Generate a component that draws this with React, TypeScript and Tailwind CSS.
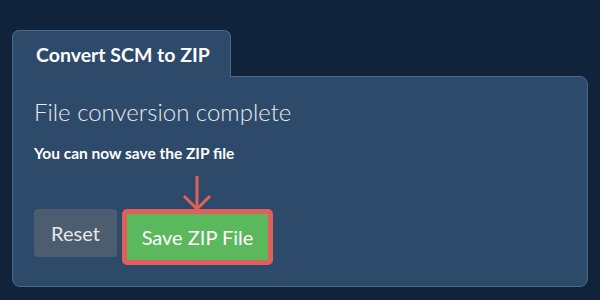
export default function App() {
  return (
    <div className="h-[300px] w-[600px] bg-[#11233a] pl-[12px] pt-[30px] font-['Lato','Liberation_Sans',sans-serif]">
      <div className="w-[576px]">
        <div className="relative z-10 -mb-px flex h-[47px] w-[219px] items-center rounded-t-[7px] border border-b-0 border-[#4d6886] bg-[#2d4a6a] pl-[23px] pt-[2px]">
          <span className="text-[19.5px] font-bold text-white">Convert SCM to ZIP</span>
        </div>
        <div className="h-[211px] rounded-b-[8px] rounded-tr-[8px] border border-[#4d6886] bg-[#2d4a6a] px-[21px] pt-[20px]">
          <h2 className="text-[24px] font-light leading-[30px] text-[#e6ebf0]">File conversion complete</h2>
          <p className="mt-[16px] text-[15.5px] font-bold leading-[20px] text-white">You can now save the ZIP file</p>
          <div className="relative mt-[8px] flex items-start gap-[5px] pt-[38px]">
            <svg
              className="absolute left-[148px] top-[5px]"
              width="30"
              height="36"
              viewBox="0 0 30 36"
              fill="none"
              stroke="#e0605a"
              strokeWidth="3"
            >
              <path d="M15 0 V33" />
              <path d="M2 20 L15 33 L28 20" />
            </svg>
            <button
              type="button"
              className="h-[48px] w-[83px] rounded-[4px] bg-[#4c5d70] text-[20px] text-[#e4e8ec]"
            >
              Reset
            </button>
            <button
              type="button"
              className="h-[56px] w-[151px] rounded-[5px] border-[5px] border-[#df5f5a] bg-[#5cb85c] text-[20px] text-white"
            >
              Save ZIP File
            </button>
          </div>
        </div>
      </div>
    </div>
  );
}
